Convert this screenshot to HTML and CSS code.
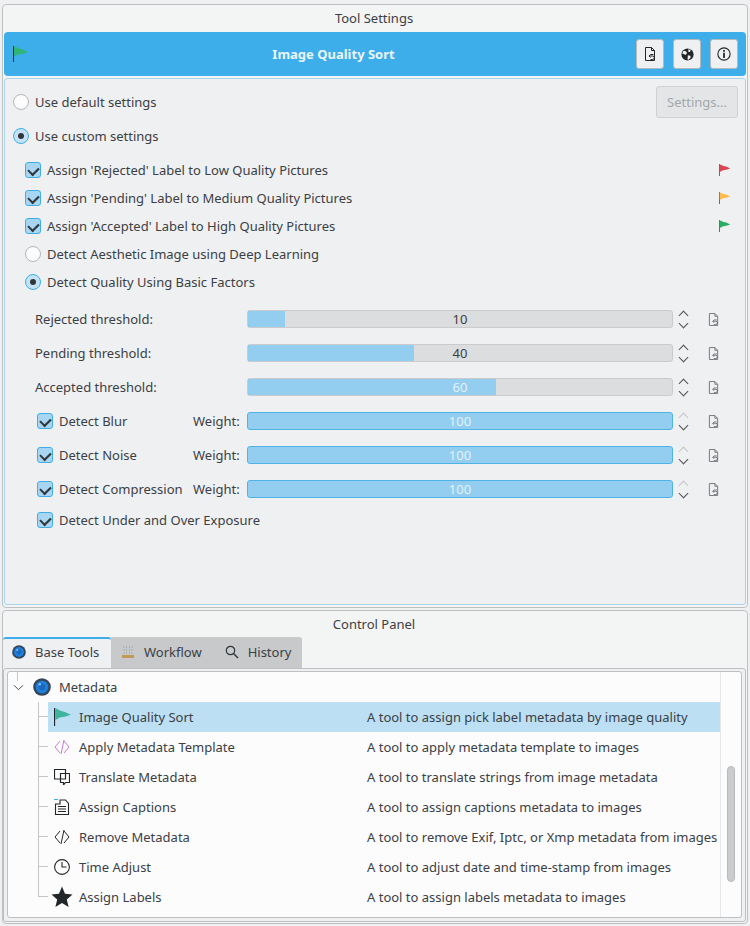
FILE: index.html
```html
<!DOCTYPE html>
<html lang="en">
<head>
    <meta charset="UTF-8">
    <title>Tool Settings</title>
    <link rel="stylesheet" href="styles.css">
</head>
<body>
    <svg class="defs">
        <defs>
            <symbol id="flag" viewBox="0 0 16 16">
                <path d="M0.5 0v16" stroke="#232629" fill="none"/>
                <path d="M1 .5C3 .5 5 2.500 8 3c2 .5 4 1.500 7 3-3 1-5 2-7.500 2C5 8 3 10 1 10.500z" fill="currentColor"/>
            </symbol>
            <symbol id="reset" viewBox="0 0 12 14">
                <path d="M1.500.5h6l3 3v10h-9zM7.500.5v3h3" fill="none" stroke="currentColor"/>
                <path d="M9.500 7.500h-3l-1.500 1.500 1.500 1.500M5.500 9h3a1.700 1.700 0 0 1 0 3.500h-2" fill="none" stroke="currentColor"/>
            </symbol>
            <symbol id="eye" viewBox="0 0 20 20">
                <circle cx="10" cy="10" r="9.800" fill="#33475b"/>
                <circle cx="10" cy="10" r="7" fill="#1f7fdc"/>
                <circle cx="10" cy="10" r="3.500" fill="#1c66bb"/>
                <circle cx="7.500" cy="7" r="1.300" fill="#9ccbf2"/>
            </symbol>
        </defs>
    </svg>

    <section class="panel settings-panel">
        <div class="panel-title">Tool Settings</div>
        <header class="tool-head">
            <svg class="head-flag"><use href="#flag"/></svg>
            <h1>Image Quality Sort</h1>
            <div class="head-btns">
                <button class="icon-btn"><svg class="ico-doc"><use href="#reset"/></svg></button>
                <button class="icon-btn">
                    <svg width="13" height="13" viewBox="0 0 16 16">
                        <circle cx="8" cy="8" r="7.500" fill="#232629"/>
                        <path d="M3 3.500l3 .5 1.500 2-2 2.500-2-1-2-.5zM8.500 9l3 .5 .5 2-2.500 3-1.500-.5zM9 1.500l3 1-1 2.500-2-.5z" fill="#eff0f1"/>
                    </svg>
                </button>
                <button class="icon-btn">
                    <svg width="14" height="14" viewBox="0 0 16 16">
                        <circle cx="8" cy="8" r="7" fill="none" stroke="#232629" stroke-width="1.300"/>
                        <path d="M7 3.500h2v2h-2zM7 6.500h2v6h-2z" fill="#232629"/>
                    </svg>
                </button>
            </div>
        </header>

        <div class="settings-body">
            <div class="opt-row top-row">
                <span class="radio"></span><span>Use default settings</span>
                <button class="settings-btn">Settings...</button>
            </div>
            <div class="opt-row top-row second">
                <span class="radio on"></span><span>Use custom settings</span>
            </div>

            <div class="opt-row sub">
                <span class="check"></span><span>Assign 'Rejected' Label to Low Quality Pictures</span>
                <svg class="row-flag red"><use href="#flag"/></svg>
            </div>
            <div class="opt-row sub">
                <span class="check"></span><span>Assign 'Pending' Label to Medium Quality Pictures</span>
                <svg class="row-flag orange"><use href="#flag"/></svg>
            </div>
            <div class="opt-row sub">
                <span class="check"></span><span>Assign 'Accepted' Label to High Quality Pictures</span>
                <svg class="row-flag green"><use href="#flag"/></svg>
            </div>
            <div class="opt-row sub">
                <span class="radio"></span><span>Detect Aesthetic Image using Deep Learning</span>
            </div>
            <div class="opt-row sub">
                <span class="radio on"></span><span>Detect Quality Using Basic Factors</span>
            </div>

            <div class="factors">
                <div class="slide-row">
                    <label class="slide-label">Rejected threshold:</label>
                    <div class="slider"><div class="fill" style="width: 9%"></div><span>10</span></div>
                    <div class="spin"><i class="up"></i><i class="down"></i></div>
                    <svg class="ico-reset"><use href="#reset"/></svg>
                </div>
                <div class="slide-row">
                    <label class="slide-label">Pending threshold:</label>
                    <div class="slider"><div class="fill" style="width: 39.400%"></div><span>40</span></div>
                    <div class="spin"><i class="up"></i><i class="down"></i></div>
                    <svg class="ico-reset"><use href="#reset"/></svg>
                </div>
                <div class="slide-row">
                    <label class="slide-label">Accepted threshold:</label>
                    <div class="slider"><div class="fill" style="width: 58.700%"></div><span class="light">60</span></div>
                    <div class="spin"><i class="up"></i><i class="down"></i></div>
                    <svg class="ico-reset"><use href="#reset"/></svg>
                </div>
                <div class="slide-row">
                    <div class="weight-check"><span class="check"></span><span>Detect Blur</span></div>
                    <label class="weight">Weight:</label>
                    <div class="slider full"><span class="light">100</span></div>
                    <div class="spin"><i class="up off"></i><i class="down"></i></div>
                    <svg class="ico-reset"><use href="#reset"/></svg>
                </div>
                <div class="slide-row">
                    <div class="weight-check"><span class="check"></span><span>Detect Noise</span></div>
                    <label class="weight">Weight:</label>
                    <div class="slider full"><span class="light">100</span></div>
                    <div class="spin"><i class="up off"></i><i class="down"></i></div>
                    <svg class="ico-reset"><use href="#reset"/></svg>
                </div>
                <div class="slide-row">
                    <div class="weight-check"><span class="check"></span><span>Detect Compression</span></div>
                    <label class="weight">Weight:</label>
                    <div class="slider full"><span class="light">100</span></div>
                    <div class="spin"><i class="up off"></i><i class="down"></i></div>
                    <svg class="ico-reset"><use href="#reset"/></svg>
                </div>
                <div class="opt-row exposure">
                    <span class="check"></span><span>Detect Under and Over Exposure</span>
                </div>
            </div>
        </div>
    </section>

    <section class="panel control-panel">
        <div class="panel-title">Control Panel</div>
        <nav class="tabs">
            <div class="tab active"><svg width="14" height="14"><use href="#eye"/></svg>Base Tools</div>
            <div class="tab workflow">
                <svg width="12" height="14" viewBox="0 0 12 14">
                    <path d="M2 1v8M4.500 1v8M7.500 1v8M10 1v8" stroke="#a9adb0" stroke-dasharray="2 1"/>
                    <path d="M0 10h12v3h-12z" fill="#c49a5c"/>
                </svg>Workflow
            </div>
            <div class="tab">
                <svg width="14" height="14" viewBox="0 0 14 14">
                    <circle cx="5.500" cy="5.500" r="4.200" fill="none" stroke="#31363b" stroke-width="1.200"/>
                    <path d="M8.500 8.500l4.500 4.500" stroke="#31363b" stroke-width="1.400"/>
                </svg>History
            </div>
        </nav>

        <div class="tab-pane">
            <div class="tree-frame">
                <div class="tree">
                    <div class="group-row">
                        <span class="root-line"></span>
                        <svg class="chev" width="11" height="7" viewBox="0 0 12 8"><path d="M1 1.500l5 5 5-5" fill="none" stroke="#31363b"/></svg>
                        <svg class="group-ico" width="18" height="18"><use href="#eye"/></svg>
                        <span>Metadata</span>
                    </div>

                    <div class="tool-row selected">
                        <span class="branch"></span>
                        <div class="tool-cell">
                            <svg class="tool-ico teal"><use href="#flag"/></svg>
                            <span class="tool-name">Image Quality Sort</span>
                            <span>A tool to assign pick label metadata by image quality</span>
                        </div>
                    </div>
                    <div class="tool-row">
                        <span class="branch"></span>
                        <div class="tool-cell">
                            <svg class="tool-ico" viewBox="0 0 16 16"><path d="M6 2l-5 6 5 6M10 2l5 6-5 6M10 1l-3 14" fill="none" stroke="#c77bd6"/></svg>
                            <span class="tool-name">Apply Metadata Template</span>
                            <span>A tool to apply metadata template to images</span>
                        </div>
                    </div>
                    <div class="tool-row">
                        <span class="branch"></span>
                        <div class="tool-cell">
                            <svg class="tool-ico" viewBox="0 0 16 16"><path d="M.5 .5h11v9.500h-11zM6.500 4.500h9v9h-4l-2 2.500v-2.500h-3z" fill="#fff" stroke="#232629" stroke-width="1.200"/></svg>
                            <span class="tool-name">Translate Metadata</span>
                            <span>A tool to translate strings from image metadata</span>
                        </div>
                    </div>
                    <div class="tool-row">
                        <span class="branch"></span>
                        <div class="tool-cell">
                            <svg class="tool-ico" viewBox="0 0 16 16"><path d="M0 .5h4" stroke="#3daee9"/><path d="M1.500 5v10.500h13v-11l-3-3.500h-5.500v4zM4 7.500h8M4 10h8M4 12.500h8" fill="none" stroke="#232629" stroke-width="1.100"/></svg>
                            <span class="tool-name">Assign Captions</span>
                            <span>A tool to assign captions metadata to images</span>
                        </div>
                    </div>
                    <div class="tool-row">
                        <span class="branch"></span>
                        <div class="tool-cell">
                            <svg class="tool-ico" viewBox="0 0 16 16"><path d="M6 2l-5 6 5 6M10 2l5 6-5 6M10 1l-3 14" fill="none" stroke="#232629"/></svg>
                            <span class="tool-name">Remove Metadata</span>
                            <span>A tool to remove Exif, Iptc, or Xmp metadata from images</span>
                        </div>
                    </div>
                    <div class="tool-row">
                        <span class="branch"></span>
                        <div class="tool-cell">
                            <svg class="tool-ico" viewBox="0 0 16 16"><circle cx="8" cy="8" r="7.400" fill="none" stroke="#232629" stroke-width="1.100"/><path d="M8 3v5h4.500" fill="none" stroke="#232629" stroke-width="1.100"/></svg>
                            <span class="tool-name">Time Adjust</span>
                            <span>A tool to adjust date and time-stamp from images</span>
                        </div>
                    </div>
                    <div class="tool-row last">
                        <span class="branch"></span>
                        <div class="tool-cell">
                            <svg class="tool-ico star" viewBox="0 0 22 22"><path d="M11 .5l3 7.300 7.500.6-5.700 5 1.800 7.600-6.600-4.100-6.600 4.100 1.800-7.600-5.700-5 7.500-.6z" fill="#232629"/></svg>
                            <span class="tool-name">Assign Labels</span>
                            <span>A tool to assign labels metadata to images</span>
                        </div>
                    </div>
                </div>
                <div class="scroll-track"><div class="scroll-thumb"></div></div>
            </div>
        </div>
    </section>
</body>
</html>
```

FILE: styles.css
```css
* {
    box-sizing: border-box;
}
html, body {
    height: 100%;
}
body {
    margin: 0;
    background: #eff0f1;
    color: #3b4045;
    font-family: "Noto Sans", sans-serif;
    font-size: 13px;
    overflow: hidden;
}
.defs {
    display: none;
}
.panel {
    margin: 0 2px;
    background: #f3f4f4;
    border: 1px solid #bdbfc1;
    border-radius: 4px;
}
.settings-panel {
    margin-top: 4px;
    height: 604px;
    padding: 0 1px;
}
.control-panel {
    margin-top: 2px;
    height: 314px;
}
.panel-title {
    height: 27px;
    line-height: 27px;
    text-align: center;
    padding-right: 2px;
}

/* blue header */
.tool-head {
    display: flex;
    align-items: center;
    height: 44px;
    background: #3daee9;
    border-radius: 4px;
    padding: 0 8px 0 9px;
}
.head-flag {
    width: 16px;
    height: 16px;
    color: #2fb574;
}
.tool-head h1 {
    flex: 1;
    margin: 0;
    padding-left: 2px;
    font-size: 13px;
    font-weight: bold;
    text-align: center;
    color: #eaf5fc;
}
.head-btns {
    display: flex;
    gap: 9px;
}
.icon-btn {
    display: flex;
    align-items: center;
    justify-content: center;
    width: 28px;
    height: 30px;
    padding: 0;
    background: #eff0f1;
    border: 1px solid #b5b9bc;
    border-radius: 3px;
}
.ico-doc {
    width: 12px;
    height: 14px;
    color: #232629;
}

/* settings */
.settings-body {
    height: 527px;
    margin-top: 2px;
    padding: 7px 7px 0 8px;
    background: #eff0f1;
    border: 1px solid #a9d5ec;
    border-radius: 3px;
}
.opt-row {
    display: flex;
    align-items: center;
    height: 28px;
    gap: 6px;
}
.top-row {
    height: 32px;
}
.top-row.second {
    margin: 2px 0 4px;
}
.sub {
    padding-left: 12px;
    padding-right: 7px;
}
.settings-btn {
    margin-left: auto;
    width: 82px;
    height: 32px;
    padding: 0;
    font: inherit;
    color: #a4a8ab;
    background: #e3e5e6;
    border: 1px solid #cfd1d3;
    border-radius: 3px;
}
.radio {
    position: relative;
    flex: none;
    width: 16px;
    height: 16px;
    background: #fcfcfc;
    border: 1px solid #b4b7b9;
    border-radius: 50%;
}
.radio.on {
    background: #c3e2f5;
    border-color: #3daee9;
}
.radio.on::after {
    content: "";
    position: absolute;
    top: 4px;
    left: 4px;
    width: 6px;
    height: 6px;
    border-radius: 50%;
    background: #31363b;
}
.check {
    position: relative;
    flex: none;
    width: 16px;
    height: 16px;
    background: #a8d6f2;
    border: 1px solid #3daee9;
    border-radius: 3px;
}
.check::after {
    content: "";
    position: absolute;
    top: 2px;
    left: 4px;
    width: 5px;
    height: 8px;
    border: solid #31363b;
    border-width: 0 2px 2px 0;
    transform: rotate(45deg) scaleX(1.100);
}
.row-flag {
    margin-left: auto;
    width: 12px;
    height: 12px;
}
.red { color: #da4453; }
.orange { color: #fdbc4b; }
.green { color: #27ae60; }

/* thresholds and weights */
.factors {
    margin-top: 6px;
}
.slide-row {
    display: flex;
    align-items: center;
    height: 34px;
    padding-left: 22px;
}
.slide-label {
    width: 212px;
}
.weight-check {
    display: flex;
    align-items: center;
    gap: 6px;
    width: 158px;
    padding-left: 2px;
}
.weight {
    width: 54px;
}
.slider {
    position: relative;
    width: 426px;
    height: 18px;
    line-height: 16px;
    text-align: center;
    background: #dcddde;
    border: 1px solid #c9cbcd;
    border-radius: 3px;
    overflow: hidden;
}
.slider.full {
    background: #93cef0;
    border-color: #4fb3ea;
}
.fill {
    position: absolute;
    top: -1px;
    bottom: -1px;
    left: -1px;
    background: #93cef0;
    border: 1px solid #4fb3ea;
    border-right: 0;
    border-radius: 3px 0 0 3px;
}
.slider span {
    position: relative;
    color: #3b4045;
}
.slider span.light {
    color: #e4f1f9;
}
.spin {
    flex: none;
    width: 20px;
    display: flex;
    flex-direction: column;
    align-items: center;
    gap: 5px;
}
.spin i {
    display: block;
    width: 7px;
    height: 7px;
    border: solid #4d5257;
    border-width: 1px 0 0 1px;
}
.spin .up {
    transform: translateY(2px) rotate(45deg);
}
.spin .down {
    transform: translateY(-2px) rotate(225deg);
}
.spin .off {
    border-color: #c2c5c7;
}
.ico-reset {
    flex: none;
    width: 11px;
    height: 13px;
    margin-left: 15px;
    color: #6d7277;
}
.exposure {
    padding-left: 24px;
}

/* tabs */
.tabs {
    display: flex;
    height: 31px;
    margin-top: -1px;
}
.tab {
    display: flex;
    align-items: center;
    gap: 9px;
    padding: 0 11px 3px 11px;
    white-space: nowrap;
    background: #c7c9ca;
    border-top: 2px solid transparent;
}
.tab.active {
    width: 108px;
    padding-left: 9px;
    background: #eff0f1;
    border-top-color: #3daee9;
    border-radius: 3px 3px 0 0;
}
.tab.workflow {
    gap: 10px;
    padding-right: 12px;
}
.tab:last-child {
    border-top-right-radius: 3px;
}
.tab-pane {
    height: 254px;
    margin-right: 1px;
    padding: 2px 3px 3px;
    background: #eff0f1;
    border: 1px solid #bdbfc1;
    border-radius: 3px;
}

/* tree */
.tree-frame {
    display: flex;
    height: 100%;
    background: #fcfcfc;
    border: 1px solid #bdbfc1;
    border-radius: 3px;
}
.tree {
    flex: 1;
    position: relative;
    min-width: 0;
}
.group-row {
    position: relative;
    display: flex;
    align-items: center;
    height: 30px;
    padding-left: 5px;
}
.root-line {
    position: absolute;
    top: 0;
    left: 9px;
    height: 9px;
    border-left: 1px solid #c4c6c8;
}
.chev {
    margin-right: 9px;
}
.group-ico {
    margin-right: 8px;
}
.tool-row {
    display: flex;
    height: 30px;
    padding-left: 30px;
}
.branch {
    flex: none;
    width: 10px;
    background:
        linear-gradient(#c4c6c8, #c4c6c8) 0 0 / 1px 100% no-repeat,
        linear-gradient(#c4c6c8, #c4c6c8) 0 14px / 100% 1px no-repeat;
}
.last .branch {
    background:
        linear-gradient(#c4c6c8, #c4c6c8) 0 0 / 1px 15px no-repeat,
        linear-gradient(#c4c6c8, #c4c6c8) 0 14px / 100% 1px no-repeat;
}
.tool-cell {
    flex: 1;
    display: flex;
    align-items: center;
    padding-left: 6px;
    white-space: nowrap;
}
.selected .tool-cell {
    background: #bcdff3;
}
.tool-ico {
    flex: none;
    width: 16px;
    height: 16px;
    margin-right: 9px;
}
.teal {
    width: 18px;
    height: 18px;
    margin-right: 7px;
    color: #3eb49c;
}
.star {
    width: 22px;
    height: 22px;
    margin: 0 6px 0 -3px;
}
.tool-name {
    width: 288px;
}
.scroll-track {
    flex: none;
    width: 21px;
    padding-top: 94px;
    border-left: 1px solid #e6e7e8;
}
.scroll-thumb {
    width: 8px;
    height: 116px;
    margin-left: 6px;
    background: #cbcccd;
    border: 1px solid #b8babc;
    border-radius: 4px;
}
```
